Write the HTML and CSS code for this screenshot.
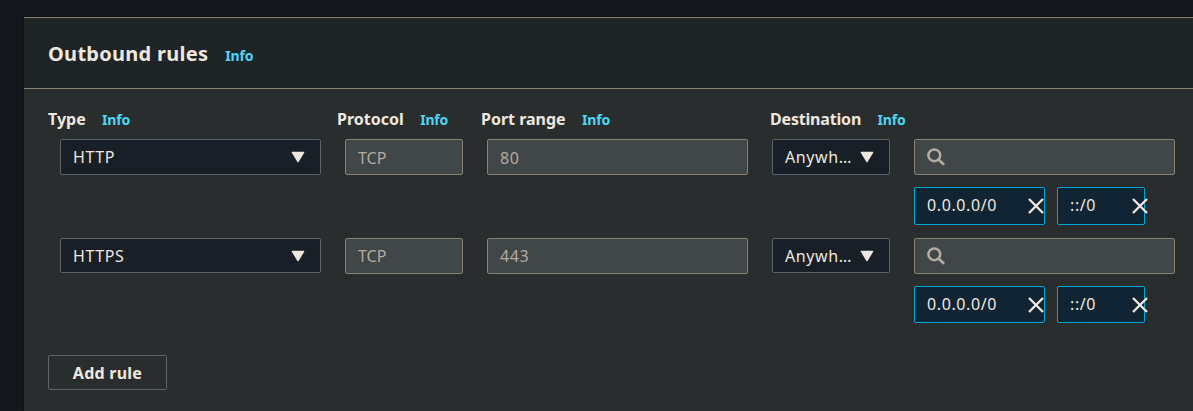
FILE: index.html
```html
<!DOCTYPE html>
<html lang="en">
<head>
<meta charset="utf-8">
<title>Outbound rules</title>
<link rel="stylesheet" href="styles.css">
</head>
<body>
<svg width="0" height="0" class="defs">
  <symbol id="caret" viewBox="0 0 14 12"><path d="M1.4 1.4h11.2L7 10.6z" fill="currentColor" stroke="currentColor" stroke-width="1.4" stroke-linejoin="round"/></symbol>
  <symbol id="search" viewBox="0 0 18 18"><circle cx="7.3" cy="7.3" r="5.9" fill="none" stroke="currentColor" stroke-width="2.5"/><path d="M11.5 11.5l5.6 5.2" stroke="currentColor" stroke-width="2.6" fill="none"/></symbol>
  <symbol id="close" viewBox="0 0 16 16"><path d="M1 1l14 14M15 1L1 15" stroke="currentColor" stroke-width="2.4" fill="none"/></symbol>
</svg>
<section class="panel">
  <header class="panel-header"><h2 class="title">Outbound rules</h2><a class="info">Info</a></header>
  <div class="panel-body">
    <div class="labels">
      <div class="label"><span>Type</span><a class="info">Info</a></div>
      <div class="label"><span>Protocol</span><a class="info">Info</a></div>
      <div class="label"><span>Port range</span><a class="info">Info</a></div>
      <div class="label"><span class="tight">Destination</span><a class="info">Info</a></div>
    </div>
    <div class="rules">
      <div class="rule">
        <div class="select"><span>HTTP</span><svg class="caret"><use href="#caret"/></svg></div>
        <div class="input"><span>TCP</span></div>
        <div class="input digits"><span>80</span></div>
        <div class="select"><span>Anywh…</span><svg class="caret"><use href="#caret"/></svg></div>
        <div class="destination">
          <div class="input search-box"><svg class="search"><use href="#search"/></svg></div>
          <div class="tokens">
            <div class="token wide"><span>0.0.0.0/0</span><svg class="close"><use href="#close"/></svg></div>
            <div class="token narrow"><span>::/0</span><svg class="close"><use href="#close"/></svg></div>
          </div>
        </div>
      </div>
      <div class="rule second">
        <div class="select"><span>HTTPS</span><svg class="caret"><use href="#caret"/></svg></div>
        <div class="input"><span>TCP</span></div>
        <div class="input digits"><span>443</span></div>
        <div class="select"><span>Anywh…</span><svg class="caret"><use href="#caret"/></svg></div>
        <div class="destination">
          <div class="input search-box"><svg class="search"><use href="#search"/></svg></div>
          <div class="tokens">
            <div class="token wide"><span>0.0.0.0/0</span><svg class="close"><use href="#close"/></svg></div>
            <div class="token narrow"><span>::/0</span><svg class="close"><use href="#close"/></svg></div>
          </div>
        </div>
      </div>
    </div>
    <button class="add">Add rule</button>
  </div>
</section>
</body>
</html>
```
FILE: styles.css
```css
* { box-sizing: border-box; }
body {
  margin: 0;
  height: 411px;
  overflow: hidden;
  padding: 17px 0 0 24px;
  background: #16171c;
  color: #eee7df;
  font: 16px/24px "Noto Sans", sans-serif;
}
.defs { display: none; }
.panel { height: 394px; background: #2a2d2d; box-shadow: 0 0 2px #08090b; }
.panel-header {
  display: flex;
  align-items: center;
  gap: 17px;
  height: 72px;
  padding: 2px 24px 0;
  background: #1f2427;
  border-top: 1px solid #8b8171;
  border-bottom: 1px solid #8b8171;
}
.title { margin: 0; font-size: 20px; line-height: 30px; font-weight: 700; letter-spacing: 0.28px; }
.info { color: #4fd5f5; font-size: 14px; line-height: 24px; font-weight: 700; letter-spacing: -0.2px; }
.panel-header .info { padding-top: 3px; }
.panel-body { padding: 18px 18px 0 24px; }
.labels {
  display: grid;
  grid-template-columns: 289px 144px 289px 1fr;
  height: 32px;
}
.label { display: flex; gap: 16.4px; font-weight: 700; height: 24px; white-space: nowrap; }
.label .info { padding-top: 1px; }
.tight { letter-spacing: -0.18px; }
.rules { padding-left: 12px; height: 216px; }
.rule {
  display: grid;
  grid-template-columns: 261px 118px 261px 118px 261px;
  column-gap: 24px;
  height: 99px;
  align-items: start;
}
.select, .input {
  display: flex;
  align-items: center;
  height: 36px;
  padding: 0 12px;
  border: 1px solid #8b8171;
  border-radius: 2px;
  background: #414648;
  color: #b5ab9e;
}
.select {
  justify-content: space-between;
  padding-right: 15px;
  border-color: #5c6266;
  background: #191f26;
  color: #eee7df;
}
.select span, .token span { letter-spacing: 0.6px; }
.digits span { letter-spacing: 0.6px; }
.input span { padding-top: 1px; }
.second .input span { padding-top: 0; }
.second .select { height: 35px; }
.caret { width: 14px; height: 12px; flex: none; margin-right: 0.5px; }
.search { width: 18px; height: 18px; }
.tokens { display: flex; gap: 12px; margin-top: 12px; }
.token {
  display: flex;
  align-items: center;
  justify-content: space-between;
  height: 38px;
  padding-left: 12px;
  border: 1px solid #00a8d8;
  border-radius: 2px;
  background: #112434;
}
.token span { padding-bottom: 2px; }
.second .token { height: 37px; }
.wide { width: 131px; }
.narrow { width: 88px; }
.close { width: 16px; height: 16px; flex: none; margin-right: 0.4px; }
.narrow .close { margin-right: -3.6px; }
.add {
  display: block;
  width: 119px;
  height: 35px;
  padding: 0;
  border: 1px solid #5c6266;
  border-radius: 2px;
  background: transparent;
  color: #eee7df;
  font: 700 16px/24px "Noto Sans", sans-serif;
  letter-spacing: 0.25px;
}
```
